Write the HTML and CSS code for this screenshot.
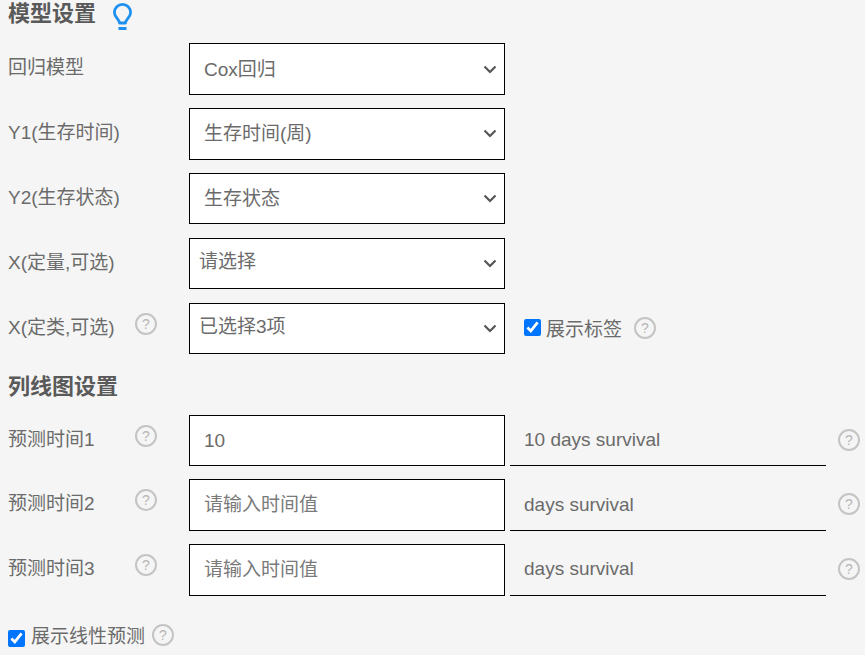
FILE: index.html
```html
<!DOCTYPE html>
<html lang="zh-CN">
<head>
    <meta charset="UTF-8">
    <title>模型设置</title>
    <link rel="stylesheet" href="styles.css">
</head>
<body>

<!-- Model settings -->
<div class="heading">
    <h3>模型设置</h3>
    <svg class="bulb" width="19" height="27" viewBox="0 0 19 27" fill="none" stroke="#1e90f0">
        <path d="M6.500 20 C6.500 16.500 1.400 14.500 1.400 9.500 A8.100 8.100 0 0 1 17.600 9.500 C17.600 14.500 12.500 16.500 12.500 20 Z" stroke-width="2.800" stroke-linejoin="round"/>
        <path d="M5.500 25.500 H13.500" stroke-width="3"/>
    </svg>
</div>

<div class="row">
    <label class="name">回归模型</label>
    <select class="field"><option>Cox回归</option></select>
</div>
<div class="row">
    <label class="name">Y1(生存时间)</label>
    <select class="field"><option>生存时间(周)</option></select>
</div>
<div class="row">
    <label class="name">Y2(生存状态)</label>
    <select class="field"><option>生存状态</option></select>
</div>
<div class="row">
    <label class="name">X(定量,可选)</label>
    <select class="field multi"><option>请选择</option></select>
</div>
<div class="row">
    <label class="name">X(定类,可选)<span class="help">?</span></label>
    <select class="field multi"><option>已选择3项</option></select>
    <label class="check tags"><input type="checkbox" checked>展示标签</label>
    <span class="help">?</span>
</div>

<!-- Nomogram settings -->
<div class="heading second">
    <h3>列线图设置</h3>
</div>

<div class="row time">
    <label class="name">预测时间1<span class="help">?</span></label>
    <input class="field" type="text" value="10">
    <input class="caption" type="text" value="10 days survival">
    <span class="help">?</span>
</div>
<div class="row time">
    <label class="name">预测时间2<span class="help">?</span></label>
    <input class="field" type="text" placeholder="请输入时间值">
    <input class="caption" type="text" value="days survival">
    <span class="help">?</span>
</div>
<div class="row time">
    <label class="name">预测时间3<span class="help">?</span></label>
    <input class="field" type="text" placeholder="请输入时间值">
    <input class="caption" type="text" value="days survival">
    <span class="help">?</span>
</div>

<div class="foot">
    <label class="check"><input type="checkbox" checked>展示线性预测</label>
    <span class="help">?</span>
</div>

</body>
</html>
```

FILE: styles.css
```css
body {
    margin: 0;
    padding: 0 8px;
    height: 655px;
    overflow: hidden;
    box-sizing: border-box;
    background-color: #f5f5f5;
    color: #6b6b6b;
    font-family: "Liberation Sans", "Noto Sans CJK SC", sans-serif;
    font-size: 19px;
}
.heading {
    display: flex;
    align-items: center;
    height: 28px;
    margin-bottom: 15.250px;
}
.heading h3 {
    margin: 0;
    font-size: 22px;
    line-height: 28px;
    color: #5a5a5a;
}
.bulb {
    margin: 5px 0 0 17px;
}
.second {
    margin-top: 19px;
    margin-bottom: 13.550px;
}
.row {
    display: flex;
    align-items: flex-start;
    height: 51.500px;
    margin-bottom: 13.350px;
}
.time {
    height: 51.700px;
    margin-bottom: 13px;
}
.name {
    display: flex;
    align-items: center;
    justify-content: space-between;
    width: 181px;
    height: 45px;
    padding-right: 32px;
    box-sizing: border-box;
    flex-shrink: 0;
}
.name .help {
    margin-bottom: 3px;
}
.field {
    width: 316px;
    height: 100%;
    box-sizing: border-box;
    padding: 0 14px;
    border: 1px solid #000;
    border-radius: 0;
    background-color: #fff;
    color: #6b6b6b;
    font-family: inherit;
    font-size: 19px;
    outline: none;
    flex-shrink: 0;
}
select.field {
    appearance: none;
    background-image: url("data:image/svg+xml,%3Csvg xmlns='http://www.w3.org/2000/svg' width='14' height='9'%3E%3Cpath d='M1.500 1.500 L7 7 L12.500 1.500' fill='none' stroke='%23555' stroke-width='2.200'/%3E%3C/svg%3E");
    background-repeat: no-repeat;
    background-position: right 7px center;
}
select.multi {
    padding: 0 9px 4px;
}
.field::placeholder {
    color: #7a7a7a;
}
.caption {
    width: 316px;
    height: 100%;
    box-sizing: border-box;
    margin-left: 5px;
    padding: 0 14px;
    border: none;
    border-bottom: 1px solid #000;
    background: transparent;
    color: #6b6b6b;
    font-family: inherit;
    font-size: 19px;
    outline: none;
    flex-shrink: 0;
}
.caption + .help {
    margin: 14px 0 0 12px;
}
.check {
    display: flex;
    align-items: center;
}
.check input {
    width: 17px;
    height: 17px;
    margin: 0 5px 0 0;
    accent-color: #0075ff;
}
.tags {
    height: 49px;
    margin-left: 19px;
}
.tags + .help {
    margin: 14px 0 0 12px;
}
.foot {
    display: flex;
    align-items: center;
    height: 30px;
    margin-top: 24px;
}
.foot input {
    margin: 8px 6px 0 0;
}
.foot .help {
    margin-left: 7px;
}
.help {
    display: inline-block;
    width: 22px;
    height: 22px;
    box-sizing: border-box;
    border: 2px solid #c4c4c4;
    border-radius: 50%;
    color: #b5b5b5;
    font-size: 14px;
    line-height: 18px;
    text-align: center;
    flex-shrink: 0;
}
```
